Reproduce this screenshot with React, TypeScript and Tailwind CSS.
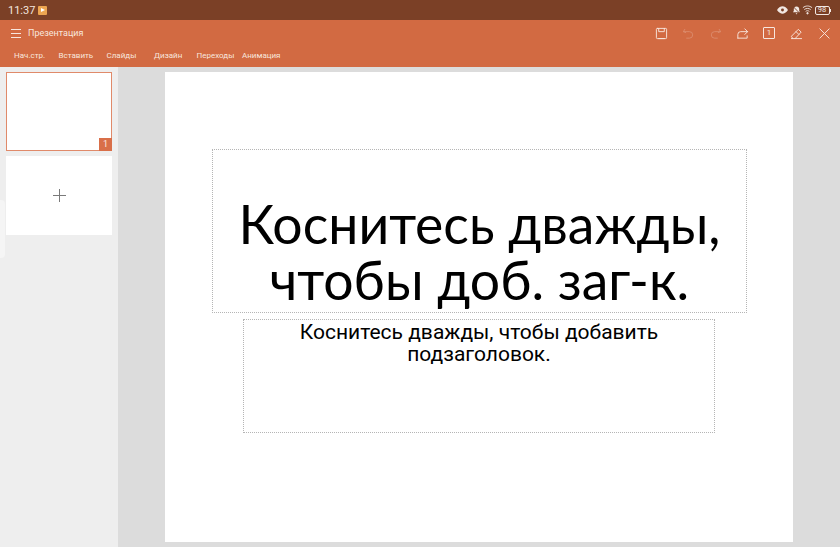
import * as React from "react"

const TABS = [
  { label: "Нач.стр.", w: "w-[44.5px]" },
  { label: "Вставить", w: "w-[48px]" },
  { label: "Слайды", w: "w-[47.5px]" },
  { label: "Дизайн", w: "w-[42.5px]" },
  { label: "Переходы", w: "w-[45.5px]" },
  { label: "Анимация", w: "w-[44px]" },
]

function Icon({ children, className }: { children: React.ReactNode; className?: string }) {
  return (
    <svg
      viewBox="0 0 14 14"
      fill="none"
      stroke="currentColor"
      strokeWidth="1"
      strokeLinecap="round"
      strokeLinejoin="round"
      className={className}
    >
      {children}
    </svg>
  )
}

function StatusBar() {
  return (
    <div className="flex h-[20px] items-center justify-between bg-[#7b4026] pl-[8px] pr-[9px]">
      <div className="flex items-center gap-[3px]">
        <span className="text-[11px] leading-none text-[#f3e6df]">11:37</span>
        <div className="flex h-[9px] w-[9px] items-center justify-center rounded-[1px] bg-[#eda551]">
          <span className="h-0 w-0 border-y-[2.5px] border-l-[4px] border-y-transparent border-l-white" />
        </div>
      </div>
      <div className="flex items-center gap-[1.5px] text-[#f1e7e2]">
        <svg viewBox="0 0 12 8" className="mr-[2px] h-[8px] w-[11px]" fill="currentColor">
          <path d="M0 4C2 1 4 0 6 0s4 1 6 4c-2 3-4 4-6 4S2 7 0 4z" />
          <circle cx="6" cy="4" r="1.6" fill="#7b4026" />
        </svg>
        <svg viewBox="0 0 10 10" className="h-[10px] w-[9px]" fill="currentColor">
          <path d="M5 1c2 0 3 1.500 3 3v2l1 1.500H1L2 6V4c0-1.500 1-3 3-3zM4 8.500h2L5 10z" />
          <path d="M1 1l8 8" stroke="#7b4026" strokeWidth="1" />
        </svg>
        <svg viewBox="0 0 12 10" className="h-[10px] w-[11px]" fill="none" stroke="currentColor" strokeWidth="1">
          <path d="M1 2.500C4 0 8 0 11 2.500M2.500 4.500c2-1.600 5-1.600 7 0M4 6.500c1.200-1 2.800-1 4 0" />
          <circle cx="6" cy="8.500" r="0.8" fill="currentColor" />
        </svg>
        <div className="flex items-center">
          <div className="flex h-[9px] w-[15px] items-center justify-center rounded-[2px] border border-[#f1e7e2]">
            <span className="text-[7.5px] leading-none">98</span>
          </div>
          <div className="ml-[0.5px] h-[3px] w-[1px] bg-[#f1e7e2]" />
        </div>
      </div>
    </div>
  )
}

function Header() {
  return (
    <div className="h-[47px] bg-[#d26a42] text-[#f8e6de]">
      <div className="flex h-[26px] items-center justify-between pl-[11px] pr-[9px]">
        <div className="flex items-center gap-[7px]">
          <div className="flex w-[10px] flex-col gap-[3px]">
            <div className="h-px bg-[#f8e6de]" />
            <div className="h-px bg-[#f8e6de]" />
            <div className="h-px bg-[#f8e6de]" />
          </div>
          <span className="text-[9px] leading-none">Презентация</span>
        </div>
        <div className="flex items-center">
          <Icon className="mr-[14px] h-[13px] w-[13px]">
            <rect x="1.500" y="1.500" width="11" height="11" rx="1" />
            <path d="M4 1.500v3.500h6V1.500M4 12.500h6" />
          </Icon>
          <Icon className="mr-[14px] h-[13px] w-[13px] text-[#db8a6c]">
            <path d="M3 2.500L1.500 5 4 6M1.500 5H8a3.500 3.500 0 010 7H5" />
          </Icon>
          <Icon className="mr-[14px] h-[13px] w-[13px] text-[#db8a6c]">
            <path d="M11 2.500L12.500 5 10 6M12.500 5H6a3.500 3.500 0 000 7h3" />
          </Icon>
          <Icon className="mr-[14px] h-[13px] w-[13px]">
            <path d="M2 12V8a3 3 0 013-3h7.500M9.500 2l3 3-3 3M2 12h10V9.500" />
          </Icon>
          <div className="mr-[15px] flex h-[12px] w-[12px] items-center justify-center rounded-[1px] border border-[#f8e6de]">
            <span className="text-[8px] leading-[10px]">1</span>
          </div>
          <Icon className="mr-[15px] h-[13px] w-[13px]">
            <path d="M1.500 12.500h11M3 12.500L1.500 10 9 2.500l3 3-6.500 7M6.500 5l3 3" />
          </Icon>
          <Icon className="h-[13px] w-[13px]">
            <path d="M2 2l10 10M12 2L2 12" />
          </Icon>
        </div>
      </div>
      <div className="flex h-[19px] items-center pl-[14px]">
        {TABS.map((t) => (
          <span key={t.label} className={`${t.w} whitespace-nowrap text-[8px] leading-none`}>
            {t.label}
          </span>
        ))}
      </div>
    </div>
  )
}

function Sidebar() {
  return (
    <div className="relative w-[118px] shrink-0 bg-[#eeeeee] pl-[6px] pt-[5px]">
      <div className="relative h-[79px] w-[106px] border-[1.5px] border-[#e08a6a] bg-white">
        <div className="absolute -bottom-[1px] -right-[1px] flex h-[13px] w-[13px] items-center justify-center bg-[#d96f49] text-[9px] leading-none text-[#fbe9e1]">
          1
        </div>
      </div>
      <div className="mt-[5px] flex h-[79px] w-[106px] items-center justify-center bg-white">
        <svg viewBox="0 0 13 13" className="h-[13px] w-[13px]" stroke="#7a7a7a" strokeWidth="1">
          <path d="M6.500 0v13M0 6.500h13" />
        </svg>
      </div>
      <div className="absolute left-0 top-[133px] h-[58px] w-[5px] rounded-r-[4px] bg-[#f5f5f5]" />
    </div>
  )
}

function Slide() {
  return (
    <div className="ml-[47px] mt-[5px] h-[470px] w-[628px] bg-white pt-[77px] text-black">
      <div className="ml-[47px] flex h-[164px] w-[535px] flex-col justify-end border border-dotted border-[#b5b5b5] pb-[5px] text-center font-['Lato',sans-serif] text-[53.5px] leading-[56px]">
        <div>
          Коснитесь дважды,
          <br />
          чтобы доб. заг-к.
        </div>
      </div>
      <div className="ml-[78px] mt-[6px] h-[114px] w-[472px] border border-dotted border-[#b5b5b5] text-center text-[21px] leading-[22px]">
        <div className="px-[20px] pt-[1px]">Коснитесь дважды, чтобы добавить подзаголовок.</div>
      </div>
    </div>
  )
}

export default function App() {
  return (
    <div className="flex h-[547px] w-[840px] flex-col overflow-hidden font-['Roboto',sans-serif]">
      <StatusBar />
      <Header />
      <div className="flex flex-1 bg-[#dcdcdc]">
        <Sidebar />
        <Slide />
      </div>
    </div>
  )
}
